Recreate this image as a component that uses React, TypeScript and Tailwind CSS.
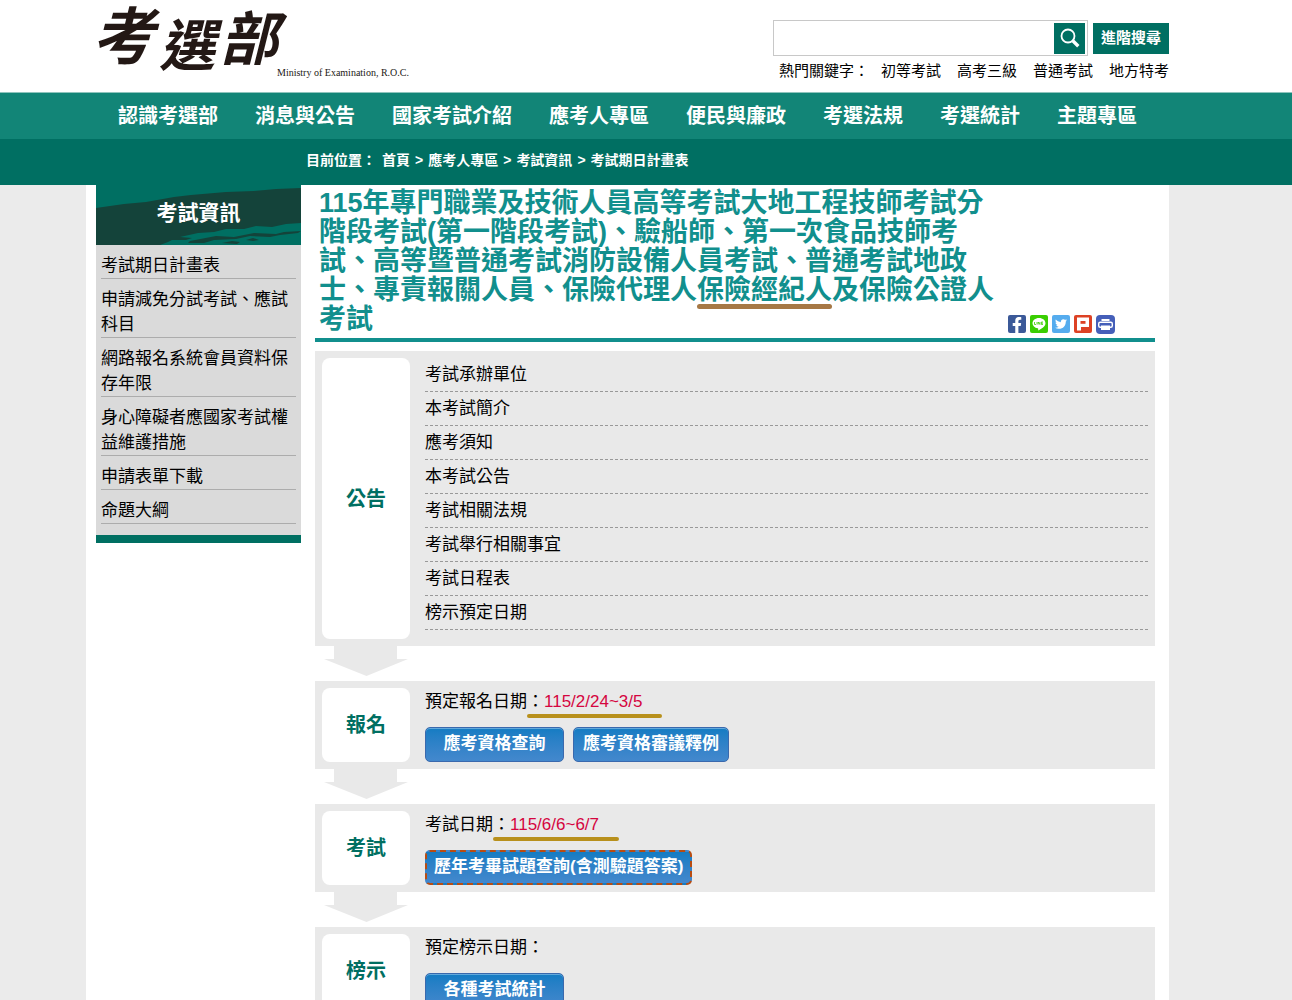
import React from 'react';
import { FaFacebookF, FaTwitter } from 'react-icons/fa';

const navItems = ['認識考選部', '消息與公告', '國家考試介紹', '應考人專區', '便民與廉政', '考選法規', '考選統計', '主題專區'];

const keywords = ['初等考試', '高考三級', '普通考試', '地方特考'];

const crumbs = ['首頁', '應考人專區', '考試資訊', '考試期日計畫表'];

const sideLinks = [
  '考試期日計畫表',
  '申請減免分試考試、應試科目',
  '網路報名系統會員資料保存年限',
  '身心障礙者應國家考試權益維護措施',
  '申請表單下載',
  '命題大綱',
];

const notices = ['考試承辦單位', '本考試簡介', '應考須知', '本考試公告', '考試相關法規', '考試舉行相關事宜', '考試日程表', '榜示預定日期'];

function Logo() {
  return (
    <a href="#" aria-label="考選部" className="block w-[330px] shrink-0">
      <svg viewBox="0 0 330 92" className="block h-[92px] w-full overflow-visible" fill="#231815">
        <g fontFamily="'Noto Sans CJK TC', sans-serif" fontWeight="700" fontStyle="italic">
          <text x="6" y="59" fontSize="62">考</text>
          <text x="73" y="66" fontSize="56">選</text>
          <text x="134" y="60" fontSize="58">部</text>
        </g>
        <text x="191" y="76" fontSize="10" fontFamily="'Liberation Serif', serif">Ministry of Examination, R.O.C.</text>
      </svg>
    </a>
  );
}

function Header() {
  return (
    <header className="bg-white pr-[37px]">
      <div className="mx-auto flex max-w-[1083px] justify-between">
        <Logo />
        <div className="pt-5">
          <form className="flex items-center justify-end gap-[5px]" onSubmit={(e) => e.preventDefault()}>
            <div className="flex h-9 w-[315px] items-center border border-[#c8c8c8] pr-[2px]">
              <input type="text" aria-label="搜尋" className="h-full min-w-0 flex-1 px-2 text-[15px] outline-none" />
              <button type="submit" aria-label="搜尋" className="flex size-[31px] items-center justify-center bg-[#006f62]">
                <svg viewBox="0 0 20 20" className="size-5" fill="none" stroke="#fff">
                  <circle cx="8" cy="8" r="6.5" strokeWidth="1.8" />
                  <path d="M12.8 12.8l5.500 5.500" strokeWidth="3.400" />
                </svg>
              </button>
            </div>
            <button type="button" className="h-[31px] w-[76px] bg-[#006f62] text-[15px] font-bold text-white">進階搜尋</button>
          </form>
          <div className="mt-1 flex justify-end gap-4 text-[15px] leading-[22px]">
            <span className="-mr-1">熱門關鍵字：</span>
            {keywords.map((k) => (
              <a key={k} href="#">{k}</a>
            ))}
          </div>
        </div>
      </div>
    </header>
  );
}

function ShareIcons() {
  return (
    <div className="mr-10 flex gap-1">
      <a href="#" aria-label="Facebook" className="flex size-[18px] items-end justify-center rounded-[2px] bg-[#3b5998] text-white">
        <FaFacebookF size={16} />
      </a>
      <a href="#" aria-label="LINE" className="size-[18px] rounded-[2px] bg-[#3ace01]">
        <svg viewBox="0 0 18 18">
          <path d="M9 3C5.200 3 2.500 5.300 2.500 8.200c0 2.600 2.200 4.600 5.200 5.100.8.1.5.9.5 2.200 2.500-1.300 7.300-3.900 7.300-7.300C15.500 5.300 12.800 3 9 3z" fill="#fff" />
          <path d="M4.500 7v2.500h1.500M7 7v2.500M8.200 9.500V7l1.700 2.500V7M13 7h-1.600v2.500H13M11.400 8.200H13" fill="none" stroke="#3ace01" strokeWidth=".8" />
        </svg>
      </a>
      <a href="#" aria-label="Twitter" className="flex size-[18px] items-center justify-center rounded-[2px] bg-[#55acee] text-white">
        <FaTwitter size={12} />
      </a>
      <a href="#" aria-label="Plurk" className="size-[18px] rounded-[2px] bg-[#dd4124]">
        <svg viewBox="0 0 18 18">
          <path d="M3 2.500h12V12H7v3.500H3z" fill="#fff" />
          <path d="M6.500 6h5v2.800h-5z" fill="#dd4124" />
        </svg>
      </a>
      <a href="#" aria-label="列印" className="size-[19px] rounded-[4px] bg-[#455fb9]">
        <svg viewBox="0 0 19 19">
          <path d="M5.500 4h8v2h-8z" fill="#fff" />
          <rect x="2.700" y="7.200" width="13.600" height="5" rx="1.500" fill="none" stroke="#fff" strokeWidth="1.400" />
          <path d="M5 10.500h9v4.500H5z" fill="#fff" />
        </svg>
      </a>
    </div>
  );
}

function Sidebar() {
  return (
    <aside className="w-[205px] shrink-0 self-start border-b-8 border-[#006f62] bg-[#dadada]">
      <div className="relative h-[60px] bg-[#006f62]">
        <svg viewBox="0 0 205 60" preserveAspectRatio="none" className="absolute inset-0 size-full" fill="#14433a">
          <path d="M0 23L28 19L50 17L78 12L95 10L130 7L158 6L180 4L205 3V38L190 39L176 42L160 41L148 44L130 44L118 47L102 48L84 52L96 53L90 55L76 55L72 57L64 60H0z" />
          <path d="M94 56l26-5 18 1 20-4 22 1 8-2 17-1-3 2-18 2-10 2-20-1-14 3-22 1-10 3H92zM126 58l10-2 8 1-3 2zM150 55l7-2 6 2-6 1z" />
        </svg>
        <h2 className="relative text-center text-[21px] leading-[55px] font-bold text-white">考試資訊</h2>
      </div>
      <ul className="px-[5px] pb-[11px]">
        {sideLinks.map((s) => (
          <li key={s} className="border-b border-[#acacac] pt-2 text-[17px] leading-[25px]">
            <a href="#">{s}</a>
          </li>
        ))}
      </ul>
    </aside>
  );
}

function Step({ title, last, children }: { title: string; last?: boolean; children: React.ReactNode }) {
  return (
    <>
      <section className="flex gap-[15px] bg-[#e9e9e9] p-[7px]">
        <h3 className="flex w-[88px] shrink-0 items-center justify-center rounded-lg bg-white text-[20px] font-bold text-[#006f62]">{title}</h3>
        <div className="min-w-0 flex-1 text-[17px]">{children}</div>
      </section>
      {!last && (
        <svg viewBox="0 0 84 30" className="mb-[5px] ml-[9px] block h-[30px] w-[84px]" fill="#e9e9e9">
          <path d="M10 0h63v13h11L42.500 30L0 13h10z" />
        </svg>
      )}
    </>
  );
}

function DateLine({ label, date }: { label: string; date?: string }) {
  return (
    <p className="leading-7">
      {label}
      <span className="relative">
        ：<span className="text-[#d5053f]">{date}</span>
        {date && <span className="absolute top-[22px] -right-5 left-0 h-1 rounded-full bg-[#b8901c]" />}
      </span>
    </p>
  );
}

function BlueButton({ children, focused }: { children: React.ReactNode; focused?: boolean }) {
  return (
    <button
      type="button"
      className={`h-[35px] min-w-[139px] rounded-[5px] bg-linear-to-b from-[#137cc3] to-[#4388cd] pb-[2px] font-bold text-white ${
        focused ? 'border-2 border-dashed border-[#b84c12] px-[7px]' : 'border border-[#3a69ad] px-[9px] shadow-[inset_0_1px_0_#62a9dc]'
      }`}
    >
      {children}
    </button>
  );
}

export default function App() {
  return (
    <div className="min-h-screen bg-[#ebebeb] font-['Liberation_Sans','Noto_Sans_CJK_TC',sans-serif] text-black" lang="zh-Hant">
      <Header />

      <nav className="border-t border-[#8fc4bd] bg-[#128577] pr-[37px]">
        <ul className="mx-auto flex max-w-[1083px] justify-center gap-[37px] text-[20px] leading-[46px] font-bold text-white">
          {navItems.map((n) => (
            <li key={n}><a href="#">{n}</a></li>
          ))}
        </ul>
      </nav>

      {/* Breadcrumb */}
      <div className="bg-[#006f62] pr-[37px]">
        <div className="mx-auto flex max-w-[1083px] gap-[5px] pb-1 pl-[220px] text-[14px] leading-[42px] font-bold text-white">
          <span className="mr-px">目前位置：</span>
          {crumbs.map((c, i) => (
            <React.Fragment key={c}>
              {i > 0 && <span>&gt;</span>}
              <a href="#">{c}</a>
            </React.Fragment>
          ))}
        </div>
      </div>

      <div className="pr-[37px]">
        <div className="mx-auto flex max-w-[1083px] gap-[14px] bg-white pr-[14px] pl-[10px]">
          <Sidebar />

          <main className="min-w-0 flex-1 pb-10">
            <div className="mb-[9px] flex items-end justify-between border-b-4 border-[#118f8d] pt-1 pb-1 pl-1">
              <h1 className="w-[680px] text-[27px] leading-[29px] font-bold text-[#118f8d]">
                115年專門職業及技術人員高等考試大地工程技師考試分階段考試(第一階段考試)、驗船師、第一次食品技師考試、高等暨普通考試消防設備人員考試、普通考試地政士、專責報關人員、保險代理人
                <span className="relative">
                  保險經紀人
                  <span className="absolute inset-x-0 -bottom-1 h-[5px] rounded-full bg-[#a67845]" />
                </span>
                及保險公證人考試
              </h1>
              <ShareIcons />
            </div>

            <Step title="公告">
              <ul className="pb-[9px]">
                {notices.map((n) => (
                  <li key={n} className="border-b border-dashed border-[#999] leading-[33px]">
                    <a href="#">{n}</a>
                  </li>
                ))}
              </ul>
            </Step>

            <Step title="報名">
              <DateLine label="預定報名日期" date="115/2/24~3/5" />
              <div className="mt-[11px] flex gap-[9px]">
                <BlueButton>應考資格查詢</BlueButton>
                <BlueButton>應考資格審議釋例</BlueButton>
              </div>
            </Step>

            <Step title="考試">
              <DateLine label="考試日期" date="115/6/6~6/7" />
              <div className="mt-[11px] flex">
                <BlueButton focused>歷年考畢試題查詢(含測驗題答案)</BlueButton>
              </div>
            </Step>

            <Step title="榜示" last>
              <DateLine label="預定榜示日期" />
              <div className="mt-[11px] flex">
                <BlueButton>各種考試統計</BlueButton>
              </div>
            </Step>
          </main>
        </div>
      </div>
    </div>
  );
}
